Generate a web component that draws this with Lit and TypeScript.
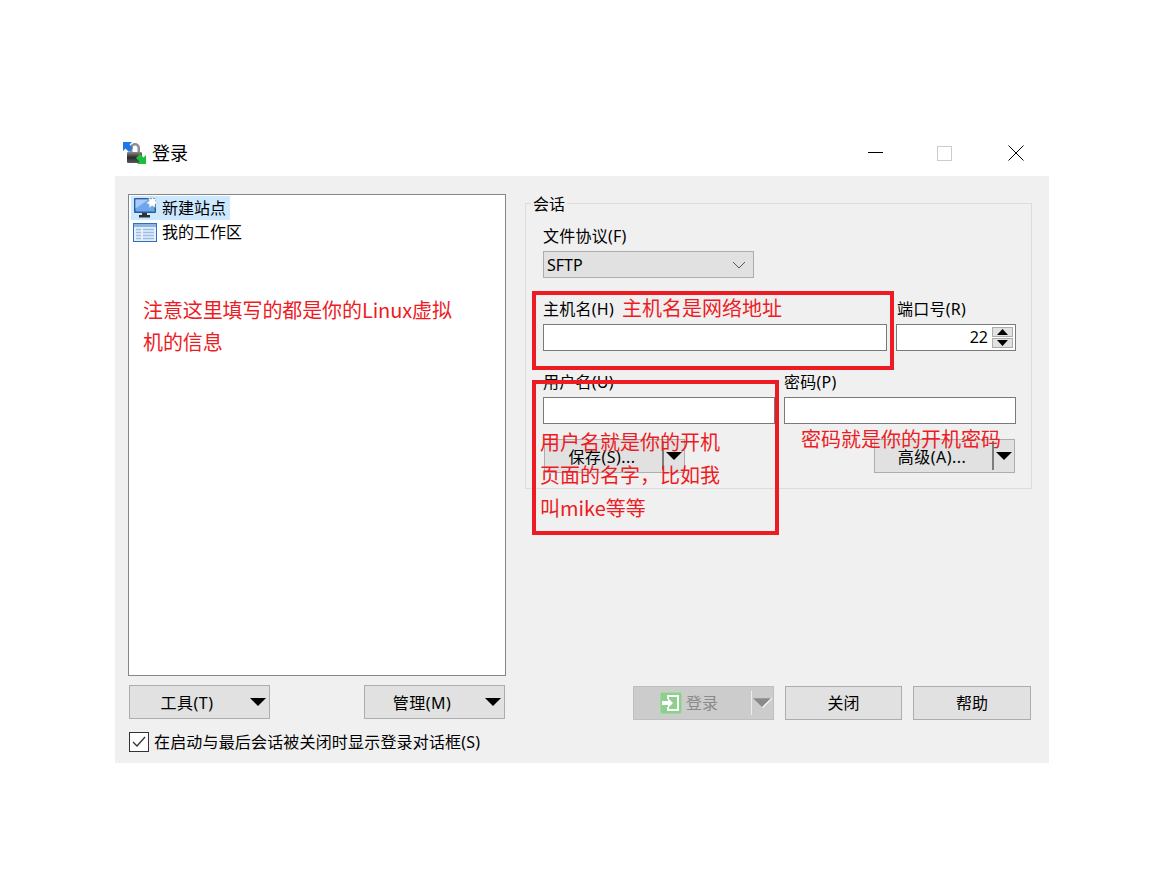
import { LitElement, html, css, svg } from "lit";
import { customElement } from "lit/decorators.js";

const arrow = svg`<path d="M1 1h16l-8 8z" fill="#000"/>`;

@customElement("app-root")
export class AppRoot extends LitElement {
  static styles = css`
    :host { display: block; background: #fff; height: 894px; padding-top: 130px; box-sizing: border-box;
      font-family: "Noto Sans", "Noto Sans CJK SC", sans-serif; font-size: 16px; color: #000; }
    * { box-sizing: border-box; }
    .window { margin-left: 115px; width: 934px; }
    .title { height: 46px; display: flex; align-items: center; padding-left: 7px; }
    .title .logo { width: 26px; height: 26px; }
    .title .name { font-size: 18px; margin-left: 4px; margin-top: -2px; line-height: 24px; font-family: "Noto Sans CJK SC", sans-serif; }
    .controls { margin-left: auto; display: flex; padding-right: 25px; align-items: center; }
    .controls svg { display: block; width: 16px; height: 16px; }
    .controls .min { margin-right: 52px; }
    .controls .max { margin-right: 56px; }
    .body { position: relative; height: 587px; background: #f0f0f0; padding: 18px 17px 0 13px; display: flex; gap: 19px; }
    .left { width: 378px; display: flex; flex-direction: column; }
    .tree { height: 482px; background: #fff; border: 1px solid #82878f; padding: 1px 2px; }
    .node { height: 24px; display: flex; align-items: center; line-height: 22px; }
    .node svg { width: 24px; height: 24px; flex: none; }
    .node span { margin-left: 5px; margin-top: -1px; }
    .node.sel { width: 99px; background: #cce8ff; }
    .node.sel span { margin-left: 4px; }
    .node.sel svg { margin-left: 3px; }
    .node.plain svg { margin-left: 2px; }
    .left-btns { display: flex; justify-content: space-between; margin-top: 9px; padding: 0 1px; }
    .check { display: flex; align-items: center; margin-top: 11px; padding-left: 1px; height: 24px; line-height: 22px; white-space: nowrap; }
    .check svg { width: 20px; height: 20px; margin-right: 5px; flex: none; }
    .check span { margin-top: -1px; letter-spacing: .17px; }
    .btn { height: 34px; background: #e1e1e1; border: 1px solid #adadad; display: flex; align-items: center; justify-content: center; line-height: 24px; }
    .split { width: 141px; display: grid; grid-template-columns: 1fr 22px; align-items: stretch; padding: 0; }
    .split > span { display: flex; align-items: center; justify-content: center; letter-spacing: .5px; padding: 1px 3px 0 0; }
    .split svg { width: 18px; height: 10px; }
    .split .arr { display: flex; align-items: center; justify-content: center; }
    .divided .arr { border-left: 2px solid #7d7d7d; margin: 1px 0 2px; }
    .right { width: 507px; display: flex; flex-direction: column; }
    fieldset { margin: 0; height: 295px; border: 1px solid #dcdcdc; border-radius: 0; padding: 0 15px 0 17px; min-width: 0; }
    legend { margin-left: -12px; padding: 0 2px; line-height: 20px; height: 18px; background: #f0f0f0; }
    .lbl { height: 20px; line-height: 20px; margin-bottom: 5px; white-space: nowrap; letter-spacing: .25px; }
    .proto { margin-top: 14px; }
    .select { width: 211px; height: 27px; background: #e1e1e1; border: 1px solid #adadad; display: flex; align-items: center; justify-content: space-between; padding: 0 7px 0 3px; line-height: 24px; }
    .select svg { width: 14px; height: 8px; }
    .grid-host { display: grid; grid-template-columns: 344px 120px; gap: 0 9px; margin-top: 21px; }
    .grid-user { display: grid; grid-template-columns: 232px 232px; gap: 0 9px; margin-top: 21px; }
    .input { height: 27px; background: #fff; border: 1px solid #7a7a7a; }
    .port { display: flex; align-items: center; justify-content: flex-end; padding-right: 2px; line-height: 22px; }
    .port span { margin-right: 4px; margin-top: -2px; }
    .spin { display: flex; flex-direction: column; gap: 1px; }
    .spin div { width: 21px; height: 10px; background: #e1e1e1; border: 1px solid #adadad; display: flex; align-items: center; justify-content: center; }
    .spin svg { width: 11px; height: 6px; display: block; }
    .offset { margin-left: 1px; }
    .group-btns { display: flex; justify-content: space-between; margin-top: 15px; padding: 0 1px; }
    .actions { margin-top: auto; margin-bottom: 43px; display: flex; padding-left: 108px; }
    .actions .login { width: 141px; background: #ccc; border-color: #bfbfbf; color: #8a8a8a; display: grid; grid-template-columns: 1fr 22px; }
    .login .main { display: flex; align-items: center; justify-content: center; gap: 3px; padding-right: 8px; }
    .login .main svg { width: 24px; height: 24px; }
    .login .arr { border-left: 1px solid #eee; margin: 2px 0; }
    .close { width: 117px; margin-left: 11px; }
    .help { width: 118px; margin-left: 11px; }
    .note { position: absolute; color: #ed1c24; font-size: 20px; white-space: nowrap; pointer-events: none; font-family: "Noto Sans CJK SC", sans-serif; }
    .rect { position: absolute; border: 4px solid #ed1c24; pointer-events: none; }
    .n1 { left: 28px; top: 118px; line-height: 32px; letter-spacing: -0.1px; }
    .n2 { left: 507px; top: 117px; line-height: 30px; }
    .n3 { left: 425px; top: 249px; line-height: 33px; }
    .n4 { left: 686px; top: 248px; line-height: 30px; }
    .r1 { left: 417px; top: 115px; width: 362px; height: 79px; }
    .r2 { left: 417px; top: 204px; width: 247px; height: 155px; }
  `;

  render() {
    return html`
      <div class="window">
        <div class="title">
          <svg class="logo" viewBox="0 0 26 26">
            <defs>
              <linearGradient id="lk" x1="0" y1="0" x2="0" y2="1">
                <stop offset="0" stop-color="#8a8a8a"/><stop offset=".5" stop-color="#2c2c2c"/><stop offset="1" stop-color="#5a5a5a"/>
              </linearGradient>
            </defs>
            <path d="M8 13V8a5 5 0 0 1 10 0v5h-2.5V8a2.5 2.5 0 0 0-5 0v5z" fill="#8f8f8f"/>
            <rect x="5" y="12" width="15" height="11" rx="1" fill="url(#lk)"/>
            <path d="M1 2h9L7.5 4.5 11 8 7 12 3.5 8.5 1 11z" fill="#1e78e6"/>
            <path d="M24 24h-9l2.5-2.5L14 18l4-4 3.5 3.5L24 15z" fill="#1cbf3c"/>
          </svg>
          <span class="name">登录</span>
          <div class="controls">
            <svg class="min" viewBox="0 0 16 16"><path d="M0 7.5h15" stroke="#000" stroke-width="1"/></svg>
            <svg class="max" viewBox="0 0 16 16"><rect x="1.5" y="1.5" width="14" height="14" fill="none" stroke="#ccc"/></svg>
            <svg viewBox="0 0 16 16"><path d="M.5.5l15 15M15.5.5l-15 15" stroke="#000" stroke-width="1" fill="none"/></svg>
          </div>
        </div>
        <div class="body">
          <div class="left">
            <div class="tree">
              <div class="node sel">
                <svg viewBox="0 0 24 24">
                  <rect x="0" y="2" width="22" height="15" rx="1" fill="#2b5a9a"/>
                  <rect x="1.5" y="3.5" width="19" height="12" fill="#6fa4ee"/>
                  <path d="M1.5 3.5h13l-13 9z" fill="#a9ccf7"/>
                  <rect x="18.5" y="14" width="2" height="1.5" fill="#3fd35a"/>
                  <rect x="8" y="17" width="5" height="2" fill="#333"/>
                  <rect x="5" y="19" width="11" height="2.5" fill="#2e2e2e"/>
                  <path d="M18 0l1.4 3 3.2-1-1.2 3.2 2.6 1.8-3 1.1.2 3.2-3.2-1.6-2.6 1.8-.1-3.3-2.9-1.3 2.9-1.6-.6-3.2 2.9 1.1z" fill="#fff" stroke="#bcc7d2" stroke-width=".5"/>
                </svg>
                <span>新建站点</span>
              </div>
              <div class="node plain">
                <svg viewBox="0 0 24 24">
                  <rect x=".5" y="3.5" width="23" height="18" fill="#e4effb" stroke="#2f6fba"/>
                  <rect x="1" y="4" width="22" height="3" fill="#8db4e0"/>
                  <path d="M3 9.5h5M3 12.5h5M3 15.5h5M3 18.5h5M10 9.5h11M10 12.5h11M10 15.5h11M10 18.5h11" stroke="#9cbde4" stroke-width="1.3"/>
                </svg>
                <span>我的工作区</span>
              </div>
            </div>
            <div class="left-btns">
              <div class="btn split"><span>工具(T)</span><div class="arr"><svg viewBox="0 0 18 10">${arrow}</svg></div></div>
              <div class="btn split"><span>管理(M)</span><div class="arr"><svg viewBox="0 0 18 10">${arrow}</svg></div></div>
            </div>
            <label class="check">
              <svg viewBox="0 0 20 20">
                <rect x=".5" y=".5" width="19" height="19" fill="#fff" stroke="#333"/>
                <path d="M4 10l4 4 8-9" fill="none" stroke="#333" stroke-width="1.3"/>
              </svg>
              <span>在启动与最后会话被关闭时显示登录对话框(S)</span>
            </label>
          </div>
          <div class="right">
            <fieldset>
              <legend>会话</legend>
              <div class="lbl proto">文件协议(F)</div>
              <div class="select">
                <span>SFTP</span>
                <svg viewBox="0 0 14 8"><path d="M1 1l6 6 6-6" fill="none" stroke="#555" stroke-width="1"/></svg>
              </div>
              <div class="grid-host">
                <div class="lbl">主机名(H)</div>
                <div class="lbl offset">端口号(R)</div>
                <div class="input"></div>
                <div class="input port">
                  <span>22</span>
                  <div class="spin">
                    <div><svg viewBox="0 0 11 6"><path d="M5.5 0L11 6H0z"/></svg></div>
                    <div><svg viewBox="0 0 11 6"><path d="M0 0h11L5.5 6z"/></svg></div>
                  </div>
                </div>
              </div>
              <div class="grid-user">
                <div class="lbl">用户名(U)</div>
                <div class="lbl">密码(P)</div>
                <div class="input"></div>
                <div class="input"></div>
              </div>
              <div class="group-btns">
                <div class="btn split divided"><span>保存(S)...</span><div class="arr"><svg viewBox="0 0 18 10">${arrow}</svg></div></div>
                <div class="btn split divided"><span>高级(A)...</span><div class="arr"><svg viewBox="0 0 18 10">${arrow}</svg></div></div>
              </div>
            </fieldset>
            <div class="actions">
              <div class="btn login">
                <div class="main">
                  <svg viewBox="0 0 24 24">
                    <rect x="1" y="1" width="22" height="22" rx="2" fill="#8fce8f" stroke="#b5e0b5"/>
                    <path d="M8 4h12v16H8v-4h2v2h8V6h-8v2H8z" fill="#fff"/>
                    <path d="M3 10h6V7l5 5-5 5v-3H3z" fill="#fff"/>
                  </svg>
                  <span>登录</span>
                </div>
                <div class="arr">
                  <svg viewBox="0 0 18 10"><path d="M1 1h16l-8 8z" fill="#8a8a8a"/><path d="M9 9l8-8" stroke="#fff" stroke-width="1"/></svg>
                </div>
              </div>
              <div class="btn close">关闭</div>
              <div class="btn help">帮助</div>
            </div>
          </div>
          <div class="note n1">注意这里填写的都是你的Linux虚拟<br />机的信息</div>
          <div class="note n2">主机名是网络地址</div>
          <div class="rect r1"></div>
          <div class="rect r2"></div>
          <div class="note n3">用户名就是你的开机<br />页面的名字，比如我<br />叫mike等等</div>
          <div class="note n4">密码就是你的开机密码</div>
        </div>
      </div>
    `;
  }
}
